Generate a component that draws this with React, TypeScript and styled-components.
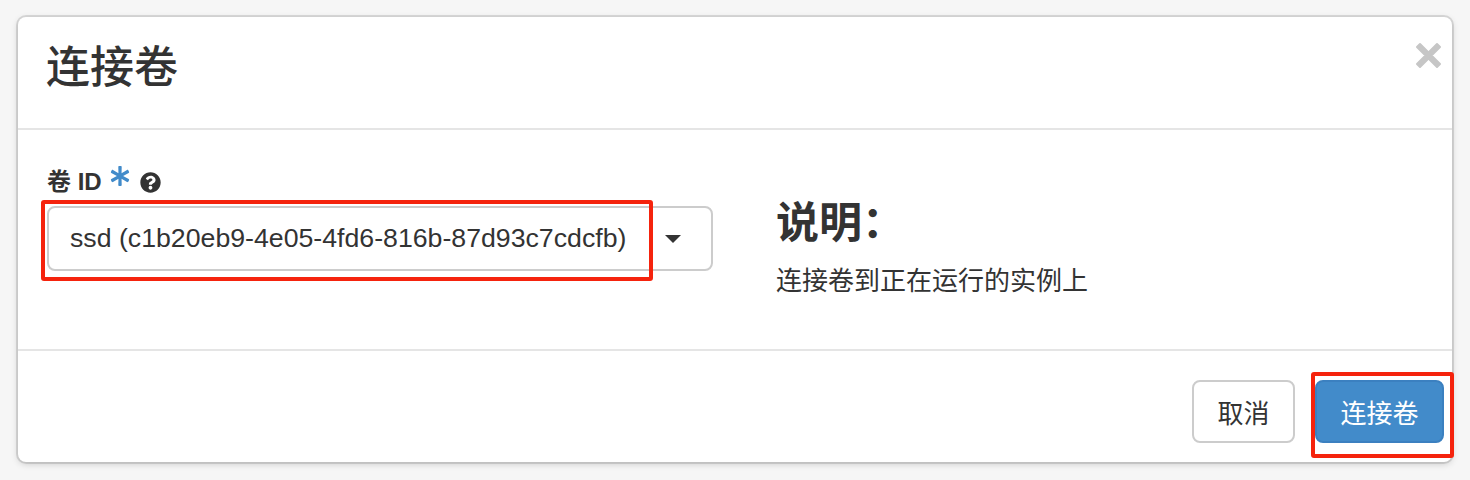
import styled, { createGlobalStyle } from "styled-components";
import { FaAsterisk, FaQuestionCircle } from "react-icons/fa";

const GlobalStyle = createGlobalStyle`
  html, body {
    margin: 0;
    padding: 0;
    background: #f6f6f6;
  }
  body {
    font-family: "Liberation Sans", "Noto Sans CJK SC", sans-serif;
    color: #333;
  }
`;

const Page = styled.div`
  padding: 17px 18px 18px 18px;
`;

const Modal = styled.div`
  width: 1434px;
  height: 445px;
  background: #fff;
  border-radius: 8px;
  box-shadow: 0 0 0 2px rgba(0, 0, 0, 0.11), 0 2px 7px rgba(0, 0, 0, 0.18);
  display: flex;
  flex-direction: column;
`;

const Header = styled.header`
  height: 111px;
  border-bottom: 2px solid #e5e5e5;
  display: flex;
  justify-content: space-between;
  align-items: flex-start;
  padding: 0 10px 0 28px;
`;

const Title = styled.h3`
  margin: 27px 0 0;
  font-size: 44px;
  line-height: 48px;
  font-weight: 500;
  color: #333;
`;

const Close = styled.button`
  margin-top: 25px;
  width: 27px;
  height: 27px;
  padding: 0;
  border: 0;
  background: none;
  cursor: pointer;
`;

const Body = styled.section`
  height: 219px;
  box-sizing: border-box;
  padding: 37px 30px 0 29px;
  display: grid;
  grid-template-columns: 666px 1fr;
  column-gap: 63px;
  align-items: start;
`;

const Field = styled.div`
  display: flex;
  flex-direction: column;
`;

const Label = styled.label`
  display: flex;
  align-items: center;
  font-size: 24px;
  line-height: 29px;
  font-weight: bold;
  color: #333;
  margin-bottom: 10px;
`;

const Required = styled.span`
  color: #428bca;
  display: inline-flex;
  margin: 0 10px 0 8px;
  position: relative;
  top: -6px;
  font-size: 20px;
`;

const Help = styled.span`
  display: inline-flex;
  color: #333;
  font-size: 21px;
  position: relative;
  top: 1px;
`;

const SelectWrap = styled.div`
  position: relative;
`;

const Select = styled.div`
  height: 65px;
  box-sizing: border-box;
  border: 2px solid #ccc;
  border-radius: 8px;
  display: flex;
  align-items: center;
  justify-content: space-between;
  padding: 0 30px 0 21px;
  font-size: 26.7px;
  color: #333;
`;

const Caret = styled.span`
  width: 0;
  height: 0;
  border-left: 8px solid transparent;
  border-right: 8px solid transparent;
  border-top: 8px solid #333;
`;

const Highlight = styled.div<{ $left: number; $top: number; $w: number; $h: number }>`
  position: absolute;
  left: ${(p) => p.$left}px;
  top: ${(p) => p.$top}px;
  width: ${(p) => p.$w}px;
  height: ${(p) => p.$h}px;
  box-sizing: border-box;
  border: 4px solid #f5230d;
  border-radius: 3px;
  pointer-events: none;
`;

const Info = styled.div`
  display: flex;
  flex-direction: column;
`;

const InfoTitle = styled.h3`
  margin: 32px 0 16px;
  font-size: 43px;
  line-height: 48px;
  font-weight: bold;
  color: #333;
`;

const InfoText = styled.p`
  margin: 0;
  font-size: 26px;
  line-height: 36px;
  color: #333;
`;

const Footer = styled.footer`
  flex: 1;
  border-top: 2px solid #e5e5e5;
  display: flex;
  justify-content: flex-end;
  align-items: flex-start;
  gap: 20px;
  padding: 29px 8px 0 0;
`;

const Button = styled.button<{ $primary?: boolean }>`
  position: relative;
  width: ${(p) => (p.$primary ? 129 : 103)}px;
  height: 63px;
  box-sizing: border-box;
  padding: 0;
  font-family: inherit;
  font-size: 26px;
  border-radius: 8px;
  border: 2px solid ${(p) => (p.$primary ? "#3b80c0" : "#ccc")};
  background: ${(p) => (p.$primary ? "#428bca" : "#fff")};
  color: ${(p) => (p.$primary ? "#fff" : "#333")};
  cursor: pointer;
`;

export default function App() {
  return (
    <>
      <GlobalStyle />
      <Page>
        <Modal>
          <Header>
            <Title>连接卷</Title>
            <Close aria-label="关闭">
              <svg width="27" height="27" viewBox="0 0 27 27">
                <path d="M5 2 L13.5 10.5 L22 2 L25 5 L16.5 13.5 L25 22 L22 25 L13.5 16.5 L5 25 L2 22 L10.5 13.5 L2 5 Z" fill="#c6c6c6" stroke="#c6c6c6" strokeWidth="2" strokeLinejoin="round" />
              </svg>
            </Close>
          </Header>
          <Body>
            <Field>
              <Label>
                卷 ID
                <Required>
                  <FaAsterisk />
                </Required>
                <Help>
                  <FaQuestionCircle />
                </Help>
              </Label>
              <SelectWrap>
                <Select>
                  <span>ssd (c1b20eb9-4e05-4fd6-816b-87d93c7cdcfb)</span>
                  <Caret />
                </Select>
                <Highlight $left={-6} $top={-6} $w={612} $h={81} />
              </SelectWrap>
            </Field>
            <Info>
              <InfoTitle>说明：</InfoTitle>
              <InfoText>连接卷到正在运行的实例上</InfoText>
            </Info>
          </Body>
          <Footer>
            <Button>取消</Button>
            <Button $primary>
              连接卷
              <Highlight $left={-6} $top={-10} $w={143} $h={86} />
            </Button>
          </Footer>
        </Modal>
      </Page>
    </>
  );
}
